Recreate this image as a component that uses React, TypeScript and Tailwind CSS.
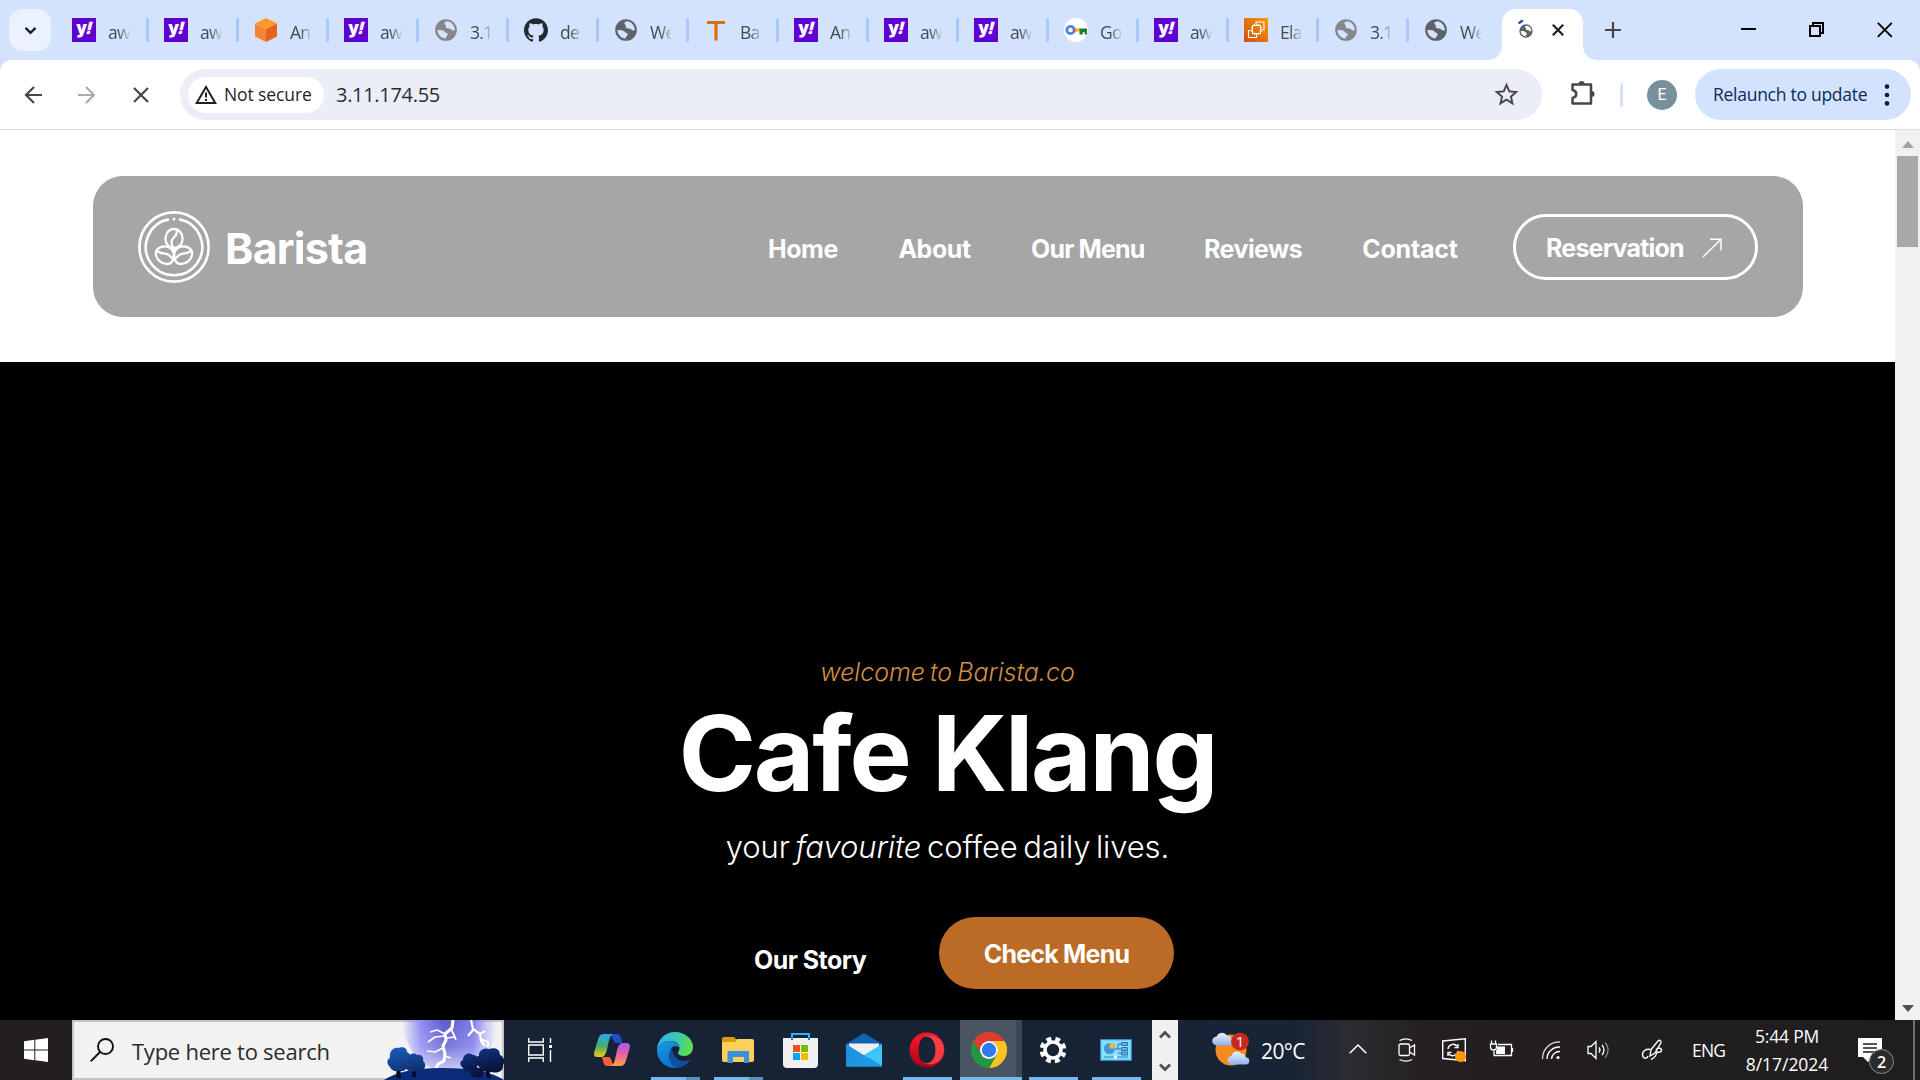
import React from "react";
import { SiGithub } from "react-icons/si";
import { MdStarBorder } from "react-icons/md";

type SvgProps = { className?: string };

const Yahoo = () => (
  <div className="relative flex h-6 w-6 items-center justify-center bg-[#5f01d1] font-['Inter'] text-[17px] font-black leading-none tracking-[-1px] text-white">
    <span className="-mt-[3px]">y</span>
    <span className="-mt-[3px] skew-x-[-14deg]">!</span>
  </div>
);

const Cube = () => (
  <svg viewBox="0 0 24 24" className="h-6 w-6">
    <path d="M12 0L23 5.500 12 11 1 5.500z" fill="#fd9827" />
    <path d="M1 5.500L12 11v13L1 18.500z" fill="#f58536" />
    <path d="M23 5.500L12 11v13l11-5.500z" fill="#e8621f" />
  </svg>
);

const Globe = ({ className = "" }: SvgProps) => (
  <svg viewBox="0 0 24 24" className={className} fill="currentColor">
    <path
      fillRule="evenodd"
      d="M12 2a10 10 0 100 20 10 10 0 000-20zm1.500 2c3.700.700 6.500 4 6.600 8-.8.700-2.200.800-2.900-.200-.7-1.100-2-1.300-3.200-1.300-1.600 0-2.600-1-2.200-2.300.300-1-1.300-1.300-1.300-2.300 0-.900 1.200-1.900 3-1.900zM4 12.300c1.800-.400 4.200-.500 5.700.300 1.200.600 1.300 1.600 2.500 2 1.400.5 1.700 1.700.9 2.600-.7.700-1.500 1.400-1.500 2.700-4-.200-7.100-3.300-7.600-7.600z"
    />
  </svg>
);

const Key = () => (
  <svg viewBox="0 0 24 24" className="h-6 w-6">
    <circle cx="12" cy="12" r="12" fill="#fff" />
    <circle cx="6.500" cy="12" r="3.700" fill="none" stroke="#4285f4" strokeWidth="2.800" />
    <path d="M9.500 10.500h3v3h-3z" fill="#ea4335" />
    <path d="M11.500 10.500h4.500v3h-4.500z" fill="#fbbc04" />
    <path d="M15.500 10.500H23v6h-2.300v-2.200h-2v2.200h-3.200z" fill="#188038" />
  </svg>
);

const Chip = () => (
  <svg viewBox="0 0 24 24" className="h-6 w-6">
    <defs>
      <linearGradient id="chipbg" x1="0" y1="1" x2="1" y2="0">
        <stop offset="0" stopColor="#c8511b" />
        <stop offset="1" stopColor="#ff9900" />
      </linearGradient>
    </defs>
    <path d="M0 0h24v24H0z" fill="url(#chipbg)" />
    <g fill="none" stroke="#fff" strokeWidth="1.100">
      <rect x="8.500" y="7.500" width="8" height="8" />
      <path d="M10.500 7.500V6M12.500 7.500V6M14.500 7.500V6M10.500 17v-1.500M12.500 17v-1.500M14.500 17v-1.500M7 9.500h1.500M7 11.500h1.500M7 13.500h1.500M16.500 9.500H18M16.500 11.500H18M16.500 13.500H18M12 6V4h8v8h-2M7 12.500H4.500v7h8V17" />
    </g>
  </svg>
);

const LetterT = () => (
  <svg viewBox="0 0 24 24" className="h-6 w-6">
    <path d="M3 4.500h18M12 4.500v18" stroke="#d86f0e" strokeWidth="3.200" fill="none" />
  </svg>
);

const gray = "h-[26px] w-[26px] -m-px text-[#85878a]";
const dark = "h-[26px] w-[26px] -m-px text-[#5f6368]";

const tabs: { icon: React.ReactNode; label: string }[] = [
  { icon: <Yahoo />, label: "aw" },
  { icon: <Yahoo />, label: "aw" },
  { icon: <Cube />, label: "An" },
  { icon: <Yahoo />, label: "aw" },
  { icon: <Globe className={gray} />, label: "3.1" },
  { icon: <SiGithub className="h-6 w-6 text-[#24292f]" />, label: "de" },
  { icon: <Globe className={dark} />, label: "We" },
  { icon: <LetterT />, label: "Ba" },
  { icon: <Yahoo />, label: "An" },
  { icon: <Yahoo />, label: "aw" },
  { icon: <Yahoo />, label: "aw" },
  { icon: <Key />, label: "Go" },
  { icon: <Yahoo />, label: "aw" },
  { icon: <Chip />, label: "Ela" },
  { icon: <Globe className={gray} />, label: "3.1" },
  { icon: <Globe className={dark} />, label: "We" },
];

function TabStrip() {
  return (
    <div className="flex h-[60px] shrink-0 bg-[#d3e3fd]">
      <div className="ml-[9px] mt-[9px] flex h-[42px] w-[42px] items-center justify-center rounded-[14px] bg-[#ebf2fe]">
        <svg viewBox="0 0 14 10" className="h-[9px] w-[13px]">
          <path d="M1.500 2L7 7.500 12.500 2" fill="none" stroke="#1f1f1f" strokeWidth="2.600" />
        </svg>
      </div>
      <div className="ml-[21px] flex h-[60px] items-center">
        {tabs.map((t, i) => (
          <div key={i} className={`flex shrink-0 items-center ${i === 0 ? "w-[92px]" : "w-[90px]"}`}>
            <div className="h-6 w-6 shrink-0">{t.icon}</div>
            <div className="ml-3 mt-[3px] w-[21px] whitespace-nowrap font-['Open_Sans'] text-[17.500px] leading-6 tracking-[-0.700px] text-[#45494e] [mask-image:linear-gradient(90deg,#000_45%,transparent_110%)]">
              {t.label}
            </div>
            {i < 15 && (
              <div className={`h-6 w-[3px] rounded-sm bg-[#a8c7fa] ${i === 0 ? "ml-[17px]" : "ml-[15px]"}`} />
            )}
          </div>
        ))}
      </div>
      <div className="-ml-[27px] flex h-[60px] w-[111px] shrink-0">
        <svg viewBox="0 0 15 51" className="mt-[9px] h-[51px] w-[15px]">
          <path d="M15 36v15H0c9 0 15-6 15-15z" fill="#fff" />
        </svg>
        <div className="mt-[9px] flex h-[51px] w-[81px] items-start rounded-t-[14px] bg-white">
          <div className="relative ml-4 mt-[14px] h-4 w-4">
            <Globe className="h-4 w-4 text-[#5f6368]" />
            <svg viewBox="0 0 6 5" className="absolute left-0 -top-1 h-[5px] w-[6px]">
              <path d="M1.500 3.700L4 2" stroke="#0b57d0" strokeWidth="2.500" strokeLinecap="round" />
            </svg>
          </div>
          <svg viewBox="0 0 12 12" className="ml-[18px] mt-[15px] h-3 w-3">
            <path d="M.8.800l10.400 10.400M11.200.8L.8 11.200" stroke="#1f1f1f" strokeWidth="2.200" />
          </svg>
        </div>
        <svg viewBox="0 0 15 51" className="mt-[9px] h-[51px] w-[15px]">
          <path d="M0 36v15h15c-9 0-15-6-15-15z" fill="#fff" />
        </svg>
      </div>
      <svg viewBox="0 0 16 16" className="ml-[7px] mt-[22px] h-4 w-4 shrink-0">
        <path d="M8 0v16M0 8h16" stroke="#474747" strokeWidth="2.200" />
      </svg>
      <div className="ml-auto mr-[27px] mt-[22px] flex h-4 gap-[53px]">
        <svg viewBox="0 0 15 16" className="h-4 w-[15px]">
          <path d="M0 7h15" stroke="#000" strokeWidth="2" />
        </svg>
        <svg viewBox="0 0 15 16" className="h-4 w-[15px]">
          <path d="M1 4h10v10H1zM4 4V1h10v10h-3" stroke="#000" strokeWidth="2" fill="none" />
        </svg>
        <svg viewBox="0 0 16 16" className="h-4 w-4">
          <path d="M.8.800l14 14M14.800.8l-14 14" stroke="#000" strokeWidth="1.900" />
        </svg>
      </div>
    </div>
  );
}

function Toolbar() {
  return (
    <div className="h-[70px] shrink-0 bg-[#d3e3fd]">
      <div className="flex h-[70px] items-center rounded-t-[12px] border-b border-[#dcdee3] bg-white font-['Open_Sans']">
        <svg viewBox="0 0 18 18" className="ml-6 h-[18px] w-[18px]">
          <path d="M18 9H2M10 1L2 9l8 8" fill="none" stroke="#474747" strokeWidth="2.200" />
        </svg>
        <svg viewBox="0 0 18 18" className="ml-9 h-[18px] w-[18px]">
          <path d="M0 9h16M8 1l8 8-8 8" fill="none" stroke="#ababab" strokeWidth="2.200" />
        </svg>
        <svg viewBox="0 0 16 16" className="ml-[37px] h-4 w-4">
          <path d="M1 1l14 14M15 1L1 15" stroke="#474747" strokeWidth="2.200" />
        </svg>
        <div className="ml-[31px] flex h-[51px] w-[1362px] items-center rounded-full bg-[#ebeef7]">
          <div className="ml-2 flex h-9 w-[136px] items-center rounded-full bg-white">
            <svg viewBox="0 0 22 19" className="ml-[7px] h-[19px] w-[22px]">
              <path d="M11 2L20.300 18H1.700z" fill="none" stroke="#1f1f1f" strokeWidth="2" />
              <path d="M11 7.500v5M11 14v2" stroke="#1f1f1f" strokeWidth="2" />
            </svg>
            <span className="ml-[7px] whitespace-nowrap text-[17.500px] font-medium tracking-[-0.100px] text-[#1f1f1f]">Not secure</span>
          </div>
          <span className="ml-[12px] whitespace-nowrap text-[20px] tracking-[-0.300px] text-[#2a2b2d]">3.11.174.55</span>
          <MdStarBorder className="ml-auto mr-[21px] h-[29px] w-[29px] text-[#474747]" />
        </div>
        <svg viewBox="0 0 26 26" className="ml-7 h-[26px] w-[26px] -mt-1">
          <path d="M2.500 4.500h18.500v19H2.500v-5.500c5-1 5-7 0-8z" fill="none" stroke="#474747" strokeWidth="2.500" strokeLinejoin="round" />
          <path d="M8.500 4a3 3 0 016 0zM21.500 11a3 3 0 010 6z" fill="#474747" />
        </svg>
        <div className="ml-[24px] h-6 w-[3px] rounded bg-[#d3e3fd]" />
        <div className="ml-6 flex h-[30px] w-[30px] items-center justify-center rounded-full bg-[#78909c] font-['Roboto'] text-[16px] text-white">E</div>
        <div className="ml-[18px] flex h-[51px] w-[216px] items-center rounded-full bg-[#d3e3fd]">
          <span className="ml-[18px] w-[156px] whitespace-nowrap text-[17.500px] tracking-[-0.270px] text-[#0b2a5c]">Relaunch to update</span>
          <svg viewBox="0 0 6 22" className="ml-[15px] h-[22px] w-[6px]" fill="#041e49">
            <circle cx="3" cy="2.600" r="2.300" />
            <circle cx="3" cy="11" r="2.300" />
            <circle cx="3" cy="19.400" r="2.300" />
          </svg>
        </div>
      </div>
    </div>
  );
}

const BeanLogo = () => (
  <svg viewBox="0 0 72 72" className="h-[72px] w-[72px] shrink-0" fill="none" stroke="#fff" strokeWidth="2.600" strokeLinecap="round">
    <circle cx="36" cy="36" r="34.600" />
    <path d="M42 8.500a28.200 28.200 0 11-12 0" />
    <circle cx="36" cy="8" r="1.500" fill="#fff" stroke="none" />
    <ellipse cx="36" cy="27.500" rx="8.600" ry="9.500" strokeWidth="2.300" />
    <path strokeWidth="2.300" d="M38.500 18.500c2.500 6-4.500 7.500-5 12-.3 2.500 1 4 1.500 6" />
    <g strokeWidth="2.300">
      <path d="M36 43c-1.500-5.500-6-8-10.500-7.500C20 36 17 39.500 18 44c1 5 5.500 9 11 9 4.500 0 7-4 7-10z" />
      <path d="M36 43c1.500-5.500 6-8 10.500-7.500C52 36 55 39.500 54 44c-1 5-5.500 9-11 9-4.500 0-7-4-7-10z" />
      <path d="M19 39.500c3 4 7.500 2 11 4 2.500 1.500 3.500 3.500 5 4.500M53 39.500c-3 4-7.500 2-11 4-2.500 1.500-3.500 3.500-5 4.500M36 38v11" />
    </g>
  </svg>
);

function SiteNav() {
  const link = "whitespace-nowrap text-center";
  return (
    <header className="flex h-[232px] shrink-0 bg-white pl-[93px] pt-[46px]">
      <div className="flex h-[141px] w-[1710px] items-center rounded-[30px] bg-[#a6a6a6] pl-[45px] font-['Inter'] text-white">
        <BeanLogo />
        <span className="ml-[15px] mt-[3px] w-[146px] whitespace-nowrap text-[43px] font-bold leading-none tracking-[-0.800px]">Barista</span>
        <nav className="ml-[397px] mt-[5px] flex text-[25px] font-bold leading-none tracking-[-0.450px]">
          <span className={`w-[69px] ${link}`}>Home</span>
          <span className={`ml-[61px] w-[73px] ${link}`}>About</span>
          <span className={`ml-[60px] w-[113px] tracking-[-0.850px] ${link}`}>Our Menu</span>
          <span className={`ml-[60px] w-[98px] tracking-[-0.550px] ${link}`}>Reviews</span>
          <span className={`ml-[60px] w-[96px] tracking-[-0.200px] ${link}`}>Contact</span>
        </nav>
        <div className="ml-auto mr-[45px] flex h-[66px] w-[245px] items-center rounded-full border-[3px] border-white">
          <span className="ml-[30px] mt-1 w-[139px] whitespace-nowrap text-[25px] font-bold leading-none tracking-[-0.800px]">Reservation</span>
          <svg viewBox="0 0 20 20" className="ml-[17px] mt-0.5 h-5 w-5">
            <path d="M1 19L19 1.200M8 1.200h11v11" fill="none" stroke="#fff" strokeWidth="1.500" />
          </svg>
        </div>
      </div>
    </header>
  );
}

function Hero() {
  return (
    <section className="flex flex-1 flex-col items-center bg-black font-['Inter'] text-white">
      <p className="mt-[294px] whitespace-nowrap text-[25px] font-light italic leading-8 text-[#d2913f] [word-spacing:-2px]">welcome to Barista.co</p>
      <h1 className="mt-[7px] whitespace-nowrap text-[104.500px] font-bold leading-[116px] tracking-[-2.200px]">Cafe Klang</h1>
      <p className="mt-[16px] whitespace-nowrap text-[31px] font-light leading-10 tracking-[-0.100px] [word-spacing:-3px]">
        your <em>favourite</em> coffee daily lives.
      </p>
      <div className="mt-[50px] flex w-[453px] items-start">
        <span className="ml-[33px] mt-[29px] w-[114px] whitespace-nowrap text-[25px] font-bold leading-7 tracking-[-0.550px]">Our Story</span>
        <div className="ml-auto flex h-[72px] w-[235px] items-center justify-center whitespace-nowrap rounded-full bg-[#bb6b25] pt-1 text-[25px] font-bold tracking-[-0.800px]">Check Menu</div>
      </div>
    </section>
  );
}

function Scrollbar() {
  return (
    <div className="flex w-[25px] shrink-0 flex-col items-center bg-[#f1f1f1]">
      <svg viewBox="0 0 12 7" className="mt-[11px] h-[7px] w-3">
        <path d="M6 0l6 7H0z" fill="#a3a3a3" />
      </svg>
      <div className="mt-2 h-[91px] w-[21px] bg-[#a8a8a8]" />
      <svg viewBox="0 0 12 7" className="mb-[8px] mt-auto h-[7px] w-3">
        <path d="M0 0h12L6 7z" fill="#505050" />
      </svg>
    </div>
  );
}

const Storm = () => (
  <svg viewBox="0 0 120 60" className="-my-[2px] h-[60px] w-[120px] shrink-0">
    <defs>
      <linearGradient id="glow" x1="0" y1="0" x2="1" y2="0">
        <stop offset="0" stopColor="#8f8bf4" stopOpacity="0" />
        <stop offset="0.200" stopColor="#8f8bf4" />
        <stop offset="0.450" stopColor="#5d5acb" />
        <stop offset="0.750" stopColor="#7c79ea" />
        <stop offset="1" stopColor="#a9a6fb" stopOpacity="0" />
      </linearGradient>
      <linearGradient id="fade" x1="0" y1="0" x2="0" y2="1">
        <stop offset="0" stopColor="#e8e6ff" stopOpacity="0" />
        <stop offset="0.500" stopColor="#e8e6ff" stopOpacity="0.200" />
        <stop offset="1" stopColor="#f0efff" stopOpacity="0.800" />
      </linearGradient>
      <linearGradient id="tree" x1="0" y1="0" x2="1" y2="1">
        <stop offset="0" stopColor="#1a5fc4" />
        <stop offset="0.700" stopColor="#0a1c50" />
        <stop offset="1" stopColor="#050c26" />
      </linearGradient>
    </defs>
    <path d="M0 0h120v60H0z" fill="#f2f2f2" />
    <path d="M0 0h120v2H0zM0 58h120v2H0zM118 0h2v60h-2z" fill="#c4c4c4" />
    <path d="M18 0h95c0 26-12 50-48 52C35 50 20 26 18 0z" fill="url(#glow)" />
    <path d="M18 0h95c0 26-12 50-48 52C35 50 20 26 18 0z" fill="url(#fade)" />
    <g fill="none" stroke="#fff" strokeLinejoin="round">
      <path d="M69 0l-1 8-7 6 1 6-3 6 2 8-1 7-6 3-2 5" strokeWidth="3" />
      <path d="M61 14l-8-4-7 2M61 16l-10 1-7 5M67 9l3 6 2 5M62 18l10-1M59 28l-8 4-8-1M60 36l7 2" strokeWidth="1.700" />
      <path d="M87 0l2 9 7 5 1 7 4 5M89 10l-5 6M96 14l5-3M96 19l8 3v5" strokeWidth="2.200" />
    </g>
    <path d="M0 60c12-8 30-12 58-12 30 0 50 4 62 12z" fill="#092b78" />
    <path d="M12 58l1-14h3l1 14zM28 57l1-13h2l1 13zM103 58l-3-12h4l3 12z" fill="#050c26" />
    <path d="M6 47c-4-3-3-8 0-9-1-6 3-11 8-10 5-2 9 0 9 4 3 1 4 5 2 7 3 3 1 9-3 10-2 3-6 2-8 2-3 1-7-1-8-4zM22 48c-3-4-1-8 1-8 0-6 7-8 10-5 5-1 7 3 6 6 3 2 3 7 0 8-2 4-6 3-8 2-3 1-7 1-9-3zM79 48c-4-3-3-7 0-8 0-6 6-8 10-5 5 0 5 5 4 9 1 4-2 7-6 6-4 2-7 1-8-2zM94 46c-5-4-3-10 1-10-1-6 6-9 10-7 7-2 11 1 11 6 5 2 5 8 3 10 1 6-6 9-11 7-5 1-10-2-14-6zM86 51c1-4 6-5 9-3 5-1 7 3 4 6 0 4-4 4-7 3-4 0-7-2-6-6z" fill="url(#tree)" />
  </svg>
);

const Copilot = () => (
  <svg viewBox="0 0 36 34" className="h-[34px] w-9">
    <defs>
      <linearGradient id="cpa" x1="0" y1="0" x2="0" y2="1">
        <stop offset="0" stopColor="#26a6f2" />
        <stop offset="0.550" stopColor="#4cb06a" />
        <stop offset="1" stopColor="#f6c915" />
      </linearGradient>
      <linearGradient id="cpb" x1="0" y1="0" x2="0" y2="1">
        <stop offset="0" stopColor="#a05cf0" />
        <stop offset="0.500" stopColor="#ee5f9a" />
        <stop offset="1" stopColor="#fda248" />
      </linearGradient>
    </defs>
    <path d="M18 1h5c2.500 0 3.500 2 4.200 4.500L28.500 10H22c-3 0-3-9-9-9z" fill="#1b50c8" />
    <path d="M18 33h-5c-2 0-3-1.500-3.500-3.500L8 24h7c3 0 2 9 8 9z" fill="#f4603a" />
    <path d="M10 1h10c-4 0-4.500 5-6 11s-2 12-7 12H3c-3 0-3.500-3-2.500-6l4-13C5.500 2.500 7 1 10 1z" fill="url(#cpa)" />
    <path d="M26 33H16c4 0 4.500-5 6-11s2-12 7-12h4c3 0 3.500 3 2.500 6l-4 13c-1 2.500-2.500 4-5.500 4z" fill="url(#cpb)" />
  </svg>
);

const Edge = () => (
  <svg viewBox="0 0 36 36" className="h-9 w-9">
    <defs>
      <linearGradient id="ega" x1="0" y1="0.300" x2="1" y2="0.500">
        <stop offset="0" stopColor="#2fb3ee" />
        <stop offset="0.500" stopColor="#36c6b8" />
        <stop offset="1" stopColor="#62e044" />
      </linearGradient>
      <linearGradient id="egb" x1="0" y1="0" x2="0.600" y2="1">
        <stop offset="0" stopColor="#1a9de0" />
        <stop offset="1" stopColor="#0a6ccf" />
      </linearGradient>
    </defs>
    <path d="M0 18C0 8 8 0 18 0s18 7 18 15c0 6-4.500 9-9 9-4 0-6-1.500-6-3s1.500-2 1.500-5c0-4-4-7-9-7C6 9 0 14 0 18z" fill="url(#ega)" />
    <path d="M0 18c0-5 5-9 12-9 6 0 10 3.500 10.500 7-3-3.500-9-2-9.500 4-.5 8 6 13 14 11-3 3.500-6.500 5-9.500 5C8 36 0 28 0 18z" fill="url(#egb)" />
    <path d="M15 16.500c-6 5-3 18 7 19.200 4.500-.700 9-4 11.500-8.200-6 2.500-11 1.500-14-1.500-2.500-2.500-4.500-6-4.500-9.500z" fill="#104f9c" />
  </svg>
);

const Folder = () => (
  <svg viewBox="0 0 32 26" className="h-[26px] w-8">
    <path d="M0 2a2 2 0 012-2h10l3 3-2 3H0z" fill="#dc9a05" />
    <path d="M0 5h13l2-3h15a2 2 0 012 2v19a2 2 0 01-2 2H2a2 2 0 01-2-2z" fill="#fdd05c" />
    <path d="M5.500 26V15a1 1 0 011-1H26a1 1 0 011 1v11h-5v-6H11v6z" fill="#3a92dc" />
  </svg>
);

const Store = () => (
  <svg viewBox="0 0 35 35" className="h-[35px] w-[35px]">
    <path d="M9 7V1h17v6" fill="none" stroke="#2cb4ec" strokeWidth="2" />
    <path d="M0 5h35v26a4 4 0 01-4 4H4a4 4 0 01-4-4z" fill="#f0f0f1" />
    <path d="M9 7V5M26 7V5" stroke="#1783b5" strokeWidth="2" />
    <path d="M10 12h7v7h-7z" fill="#f25022" />
    <path d="M18 12h7v7h-7z" fill="#7fba00" />
    <path d="M10 20h7v7h-7z" fill="#00a4ef" />
    <path d="M18 20h7v7h-7z" fill="#ffb900" />
  </svg>
);

const Mail = () => (
  <svg viewBox="0 0 36 34" className="h-[34px] w-9">
    <path d="M0 11L18 0l18 11v12H0z" fill="#0f62b5" />
    <path d="M3 10.500h30V20L18 26 3 20z" fill="#f0f0f2" />
    <path d="M0 11l36 22.500H0z" fill="#1f93df" />
    <path d="M36 11v22.500L18 22z" fill="#3bc6f4" />
    <path d="M0 33.500L18 22l18 11.500z" fill="#1e9ae4" />
  </svg>
);

const Opera = () => (
  <svg viewBox="0 0 36 36" className="h-9 w-9">
    <defs>
      <linearGradient id="opr" x1="0" y1="0" x2="0" y2="1">
        <stop offset="0" stopColor="#ff1b2d" />
        <stop offset="1" stopColor="#a70014" />
      </linearGradient>
    </defs>
    <path fillRule="evenodd" d="M18 .5a17.500 17.500 0 100 35 17.500 17.500 0 000-35zM18 4c5 0 8.500 6 8.500 14S23 32 18 32 9.500 26 9.500 18 13 4 18 4z" fill="url(#opr)" />
    <path d="M13 6c8-6 22-1 22 12S21 36 13 30c8 4 13.500-3 13.500-12S21 2 13 6z" fill="#fb4a4f" opacity="0.800" />
  </svg>
);

const Chrome = () => (
  <svg viewBox="0 0 36 36" className="h-9 w-9">
    <path d="M2.400 9A18 18 0 0133.600 9H18a9 9 0 00-7.800 13.500z" fill="#e23b2e" />
    <path d="M33.600 9A18 18 0 0118 36l7.800-13.500A9 9 0 0018 9z" fill="#fcc31e" />
    <path d="M18 36A18 18 0 012.400 9l7.800 13.500A9 9 0 0025.800 22.500z" fill="#24963f" />
    <circle cx="18" cy="18" r="9" fill="#fff" />
    <circle cx="18" cy="18" r="7.200" fill="#2f7bee" />
  </svg>
);

const Gear = () => (
  <svg viewBox="0 0 28 28" className="h-7 w-7" fill="none" stroke="#fff">
    <circle cx="14" cy="14" r="8" strokeWidth="3.600" />
    <circle cx="14" cy="14" r="11.400" strokeWidth="4" strokeDasharray="5 3.954" strokeDashoffset="2.500" transform="rotate(22.500 14 14)" />
  </svg>
);

const ControlPanel = () => (
  <svg viewBox="0 0 32 22" className="h-[22px] w-8">
    <path d="M.5.500h31v21H.5z" fill="#6fcdf6" stroke="#2f8fc4" />
    <path d="M2 2h28v18H2z" fill="#8fdcfb" />
    <circle cx="9.500" cy="9.500" r="5.500" fill="#3b98dc" />
    <path d="M9.500 9.500V4a5.500 5.500 0 015.500 5.500z" fill="#f7b52c" />
    <path d="M15 10h3V5h3M18 10h3M18 14h3" stroke="#2775b8" fill="none" />
    <path d="M21.500 3.500h6v3h-6zM21.500 8.500h6v3h-6zM21.500 13h6v3h-6z" fill="#5bb5ea" stroke="#2775b8" />
    <path d="M4 18h24" stroke="#2c84c2" />
    <path d="M14 16.500h3v3h-3z" fill="#fff" />
  </svg>
);

const apps: { icon: React.ReactNode; bar: "none" | "one" | "stack" | "active" }[] = [
  { icon: <Copilot />, bar: "none" },
  { icon: <Edge />, bar: "stack" },
  { icon: <Folder />, bar: "stack" },
  { icon: <Store />, bar: "none" },
  { icon: <Mail />, bar: "none" },
  { icon: <Opera />, bar: "one" },
  { icon: <Chrome />, bar: "active" },
  { icon: <Gear />, bar: "one" },
  { icon: <ControlPanel />, bar: "one" },
];

const Weather = () => (
  <svg viewBox="0 0 38 36" className="h-9 w-[38px]">
    <defs>
      <linearGradient id="cloud" x1="0" y1="0" x2="0" y2="1">
        <stop offset="0" stopColor="#eaf1fd" />
        <stop offset="1" stopColor="#8fb2ea" />
      </linearGradient>
    </defs>
    <circle cx="19" cy="18" r="15.500" fill="#f28c1e" />
    <path d="M5 13.500a4.500 4.500 0 01-.5-9A6 6 0 0115 3.500a5 5 0 015 5 3 3 0 01-1 5z" fill="url(#cloud)" />
    <path d="M20 32.500a4 4 0 01-.5-8.500 5.500 5.500 0 019.500-2.500 5 5 0 015 4 3.500 3.500 0 01-.5 7z" fill="url(#cloud)" />
    <circle cx="28" cy="9.500" r="9" fill="#c42b1c" />
    <text x="28" y="15" textAnchor="middle" fill="#fff" fontFamily="Open Sans, sans-serif" fontSize="15">1</text>
  </svg>
);

const tray = "h-6 w-6 shrink-0 overflow-visible";

function Taskbar() {
  return (
    <footer className="flex h-[60px] shrink-0 items-center bg-[linear-gradient(90deg,#231f20_0px,#231f20_72px,#172235_504px,#172436_1290px,#2c2b31_1350px,#241f20_1430px,#1e1d1f_1920px)] font-['Open_Sans'] text-white">
      <svg viewBox="0 0 24 24" className="ml-6 h-6 w-6 shrink-0" fill="#fff">
        <path d="M0 3.300L10.300 1.800v9.700H0zM11.300 1.700L24 0v11.500H11.300zM0 12.500h10.300v9.700L0 20.700zM11.300 12.500H24V24l-12.700-1.700z" />
      </svg>
      <div className="ml-6 flex h-[60px] w-[432px] shrink-0 items-center border-y-2 border-l-2 border-[#c4c4c4] bg-[#f2f2f2]">
        <svg viewBox="0 0 24 24" className="ml-4 h-6 w-6 shrink-0" fill="none" stroke="#111" strokeWidth="1.900">
          <circle cx="15.500" cy="8.500" r="7.500" />
          <path d="M10 14L.7 23.300" />
        </svg>
        <span className="ml-[18px] mt-0.5 w-[180px] flex-1 whitespace-nowrap text-[22px] tracking-[-0.250px] text-[#2b2b2b]">Type here to search</span>
        <Storm />
      </div>
      <svg viewBox="0 0 24 24" className="ml-6 h-6 w-6 shrink-0" fill="none" stroke="#fff" strokeWidth="1.400">
        <path d="M.7 0v4h14.600V0M.7 24v-4h14.600v4M.7 7h14.600v10H.7zM22.500 0v5M22.500 12v12" />
        <path d="M21 7h3v3h-3z" fill="#fff" stroke="none" />
      </svg>
      <div className="ml-[29px] flex h-[60px] shrink-0">
        {apps.map((a, i) => (
          <div key={i} className="flex h-[60px] w-[63px] flex-col items-center">
            <div className={`flex h-[57px] items-center justify-center pt-[3px] ${a.bar === "active" ? "w-[62px] border-r-[6px] border-[#3c4654] bg-[#4a5563] pl-[2px]" : "w-full pr-[2px]"}`}>
              {a.icon}
            </div>
            {a.bar === "active" && <div className="h-[3px] w-[62px] bg-[#76b9ed]" />}
            {a.bar === "one" && <div className="h-[3px] w-[49px] bg-[#76b9ed]" />}
            {a.bar === "stack" && (
              <div className="flex h-[3px] w-[49px] bg-[#76b9ed]">
                <div className="ml-auto h-[3px] w-[14px] bg-[#5b8fb8]" />
              </div>
            )}
          </div>
        ))}
      </div>
      <div className="ml-1 flex h-[60px] w-[26px] shrink-0 flex-col items-center justify-between bg-[#f0f0f0] pb-2 pt-[10px]">
        <svg viewBox="0 0 12 9" className="h-[9px] w-3"><path d="M1 7.500l5-5 5 5" fill="none" stroke="#505050" strokeWidth="2.800" /></svg>
        <svg viewBox="0 0 12 9" className="h-[9px] w-3"><path d="M1 1.500l5 5 5-5" fill="none" stroke="#505050" strokeWidth="2.800" /></svg>
      </div>
      <div className="ml-[34px] shrink-0"><Weather /></div>
      <span className="ml-[11px] mt-1 w-[46px] shrink-0 whitespace-nowrap text-[21px] tracking-[-0.600px]">20°C</span>
      <svg viewBox="0 0 18 10" className="ml-[42px] mt-[-2px] h-[10px] w-[18px] shrink-0"><path d="M.7 9.300L9 1l8.300 8.300" fill="none" stroke="#fff" strokeWidth="1.500" /></svg>
      <svg viewBox="0 0 24 24" className={`ml-[29px] ${tray}`} fill="none" stroke="#fff" strokeWidth="1.300">
        <rect x="3" y="6" width="10.500" height="11.500" rx="1.500" />
        <path d="M13.500 10l5-3v10l-5-3M3.500 2.500c4-2 9-2 12.500 0M3.500 21.500c4 2 9 2 12.500 0" />
      </svg>
      <svg viewBox="0 0 24 24" className={`ml-[22px] ${tray}`} fill="none" stroke="#fff" strokeWidth="1.400">
        <path d="M.7 3L23.300.700v22L.7 20.500z" />
        <path d="M6 11a5.200 5.200 0 019-3M16 6v3.500h-3.500M16 13a5.200 5.200 0 01-9 3M6 18v-3.500h3.500" />
        <circle cx="18.500" cy="18.500" r="5.500" fill="#ff9500" stroke="none" />
      </svg>
      <svg viewBox="0 0 24 24" className={`ml-6 ${tray}`} fill="none" stroke="#fff" strokeWidth="1.300">
        <path d="M8 6.500h13.500v11H4V13M22.500 10v4M1.500 2.500V6M5.500 2.500V6M.5 6h6v3a3 3 0 01-6 0z" />
        <path d="M7 8.500h8v7.500H6v-4h1z" fill="#fff" stroke="none" />
      </svg>
      <svg viewBox="0 0 20 20" className="ml-[27px] h-5 w-5 shrink-0" fill="none" stroke="#fff" strokeWidth="1.400">
        <path d="M1.500 19A16.500 16.500 0 0119 2" opacity="0.800" />
        <path d="M6 19A12 12 0 0119 7M10.500 19a8 8 0 018.500-7.500" />
        <circle cx="17" cy="17.500" r="1.600" fill="#fff" stroke="none" />
      </svg>
      <svg viewBox="0 0 24 24" className={`ml-[26px] ${tray}`} fill="none" stroke="#fff" strokeWidth="1.300">
        <path d="M1 8.500h3l5-5v17l-5-5H1zM12 9.500c1.200 1.500 1.200 3.500 0 5M15 7c2.400 3 2.400 7 0 10" />
        <path d="M18 4.500c4 4 4 11 0 15" opacity="0.450" />
      </svg>
      <svg viewBox="0 0 24 24" className={`ml-[30px] ${tray}`} fill="none" stroke="#fff" strokeWidth="1.400">
        <path d="M9 18l1-6.500L17 3c1.500-1.500 3.800 0 2.800 2L14 15z" />
        <path d="M9.500 11.500C5 10.500 1.500 13 1.500 16.500c0 4 4.500 5 5.500 1.500M15 12c2-3 6-2 5.500.500-.5 2-3 2-4.500 1.500-.5 3-3 6-6 7.500" />
      </svg>
      <span className="ml-[27px] w-[34px] shrink-0 whitespace-nowrap text-[17.500px] tracking-[-0.800px]">ENG</span>
      <div className="ml-[11px] flex w-[100px] shrink-0 flex-col text-center text-[17.500px] leading-7 tracking-[-0.050px]">
        <span className="tracking-[-0.200px]">5:44 PM</span>
        <span>8/17/2024</span>
      </div>
      <div className="relative ml-[21px] h-6 w-6 shrink-0">
        <svg viewBox="0 0 24 24" className="h-6 w-6">
          <path d="M0 0h24v19h-9l-5 5-5-5H0z" fill="#fff" />
          <path d="M5 6h14M5 10h14M5 14h14" stroke="#1e1d1f" strokeWidth="1.300" />
        </svg>
        <div className="absolute left-[11px] top-[11px] flex h-[25px] w-[25px] items-center justify-center rounded-full border border-[#8a8a8a] bg-[#2b2a2c] text-[16px] font-semibold leading-none">2</div>
      </div>
      <div className="ml-[31px] h-[60px] w-[2px] bg-[#6e6e6e]" />
    </footer>
  );
}

export default function App() {
  return (
    <div className="flex h-[1080px] w-[1920px] flex-col overflow-hidden bg-white">
      <TabStrip />
      <Toolbar />
      <main className="flex h-[890px] shrink-0">
        <div className="flex w-[1895px] flex-col">
          <SiteNav />
          <Hero />
        </div>
        <Scrollbar />
      </main>
      <Taskbar />
    </div>
  );
}
